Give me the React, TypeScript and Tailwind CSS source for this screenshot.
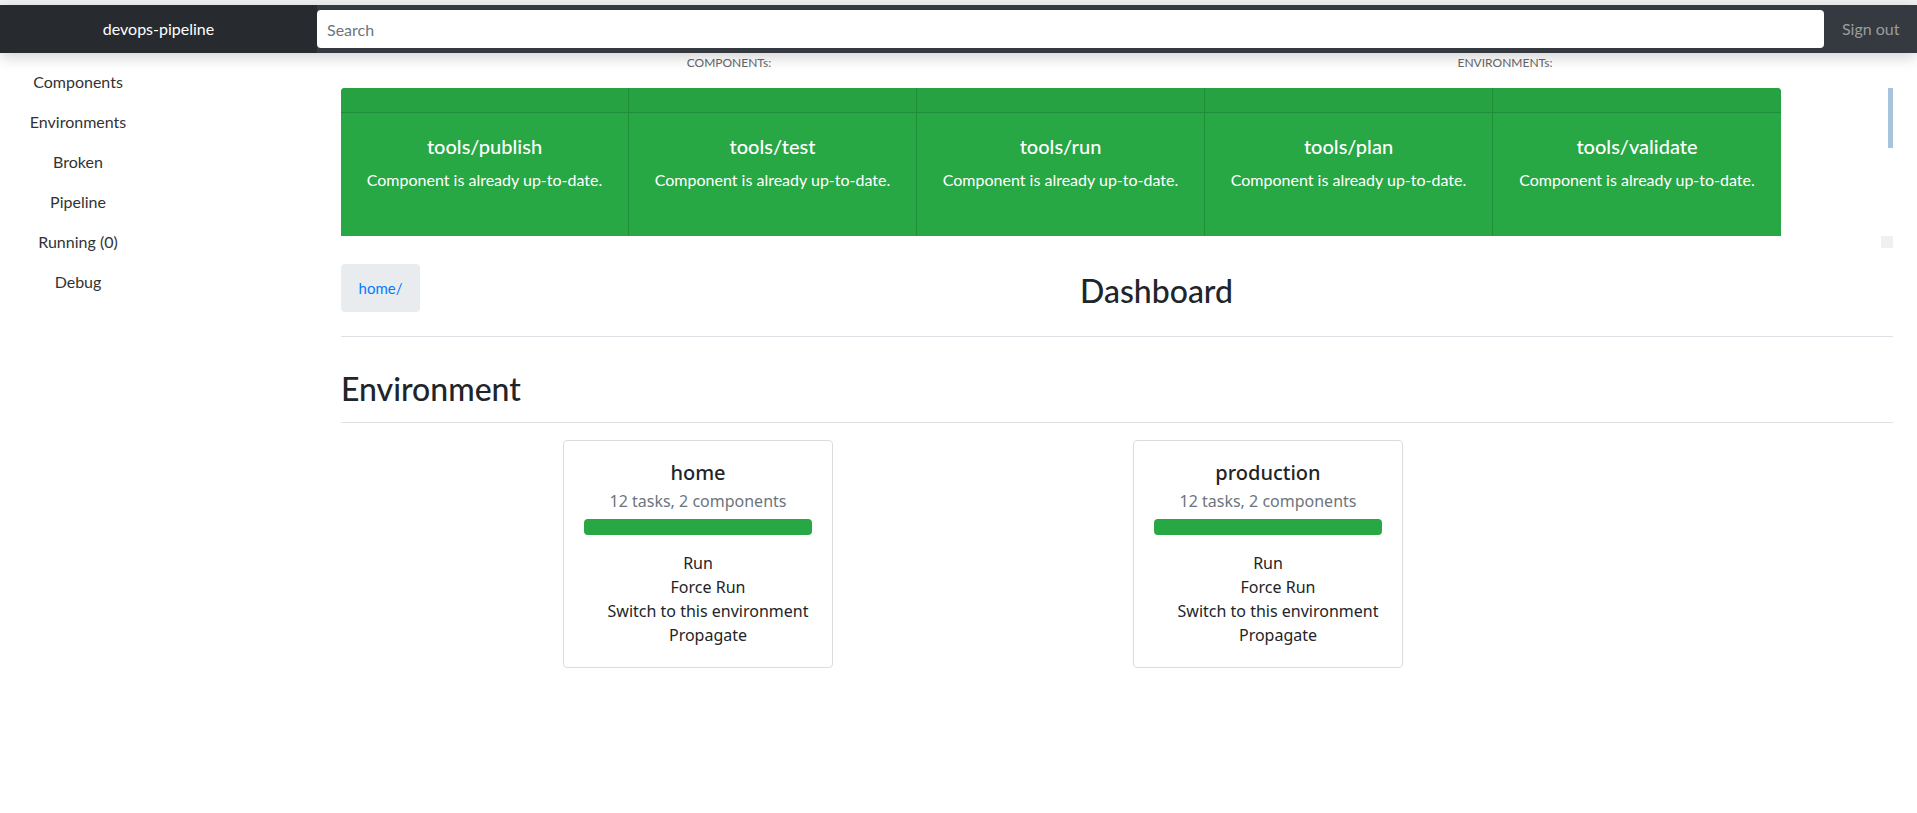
const components = [
  "tools/publish",
  "tools/test",
  "tools/run",
  "tools/plan",
  "tools/validate",
];

const environments = [
  { name: "home", tasks: 12, components: 2 },
  { name: "production", tasks: 12, components: 2 },
];

const sidebar = [
  "Components",
  "Environments",
  "Broken",
  "Pipeline",
  "Running (0)",
  "Debug",
];

function Navbar() {
  return (
    <div className="relative z-10 flex h-[48px] bg-[#343a40] shadow-[0_4px_14px_rgba(0,0,0,0.18)]">
      <div className="flex w-[317px] items-center justify-center bg-[#272b30] text-[16px] text-white">
        devops-pipeline
      </div>
      <div className="flex flex-1 items-center">
        <input
          placeholder="Search"
          className="h-[38px] w-full rounded-[4px] bg-white px-[10px] text-[16px] text-[#495057] placeholder:text-[#6c757d] outline-none"
        />
      </div>
      <div className="flex w-[93px] items-center pl-[18px] text-[16px] text-[#9a9d9f]">
        Sign out
      </div>
    </div>
  );
}

function ComponentCard({ name }: { name: string }) {
  return (
    <div className="w-[288px] border-r border-[#1f8e3a] last:border-r-0">
      <div className="h-[25px] border-b border-[#1f8e3a] bg-[#27a243]" />
      <div className="h-[123px] pt-[21px] text-center text-white">
        <div className="text-[20px] font-medium leading-[24px]">{name}</div>
        <div className="mt-[10px] text-[16px] leading-[24px]">
          Component is already up-to-date.
        </div>
      </div>
    </div>
  );
}

function EnvCard({
  name,
  tasks,
  components,
}: {
  name: string;
  tasks: number;
  components: number;
}) {
  return (
    <div className="w-[270px] rounded-[4px] border border-[#dcdcdc] px-[20px] pb-[20px] pt-[20px] text-center font-['Noto_Sans',sans-serif]">
      <div className="text-[20px] font-medium leading-[24px] text-[#212529]">
        {name}
      </div>
      <div className="mt-[4px] text-[16px] leading-[24px] text-[#6c757d]">
        {tasks} tasks, {components} components
      </div>
      <div className="mt-[6px] h-[16px] rounded-[4px] bg-[#28a745]" />
      <div className="mt-[16px] text-[16px] leading-[24px] text-[#212529]">
        <div>Run</div>
        <div className="pl-5">Force Run</div>
        <div className="pl-5">Switch to this environment</div>
        <div className="pl-5">Propagate</div>
      </div>
    </div>
  );
}

export default function App() {
  return (
    <div className="min-h-screen bg-white font-['Lato',sans-serif] text-[#212529]">
      <div className="h-[5px] bg-[#f1f1f1]" />
      <Navbar />
      <div className="flex">
        <div className="w-[341px] shrink-0 pt-[9px]">
          <div className="w-[156px]">
            {sidebar.map((item) => (
              <div
                key={item}
                className="flex h-[40px] items-center justify-center text-[16px] text-[#333]"
              >
                {item}
              </div>
            ))}
          </div>
        </div>

        <div className="w-[1552px]">
          <div className="flex h-[20px] items-center text-[12px] text-[#666]">
            <div className="flex-1 text-center">COMPONENTs:</div>
            <div className="flex-1 text-center">ENVIRONMENTs:</div>
          </div>

          <div className="mt-[15px] flex h-[160px] items-start">
            <div className="flex overflow-hidden rounded-t-[4px] bg-[#28a745]">
              {components.map((c) => (
                <ComponentCard key={c} name={c} />
              ))}
            </div>
            <div className="flex-1" />
            <div className="flex h-[160px] w-[12px] flex-col items-end justify-between">
              <div className="h-[60px] w-[5px] bg-[#a7c4dc]" />
              <div className="h-[12px] w-[12px] bg-[#f0f0f0]" />
            </div>
          </div>

          <div className="mt-[16px] flex items-center border-b border-[#dee2e6] pb-[24px]">
            <div className="flex h-[48px] w-[79px] items-center justify-center rounded-[4px] bg-[#e9ecef] text-[15px] text-[#007bff]">
              home/
            </div>
            <div className="mt-[6px] flex-1 text-center text-[32px] font-medium leading-[38px]">
              Dashboard
            </div>
          </div>

          <div className="mt-[33px] border-b border-[#dee2e6] pb-[14px] text-[32px] font-medium leading-[38px]">
            Environment
          </div>

          <div className="mt-[17px] flex gap-[300px] pl-[222px]">
            {environments.map((e) => (
              <EnvCard key={e.name} {...e} />
            ))}
          </div>
        </div>
      </div>
    </div>
  );
}
